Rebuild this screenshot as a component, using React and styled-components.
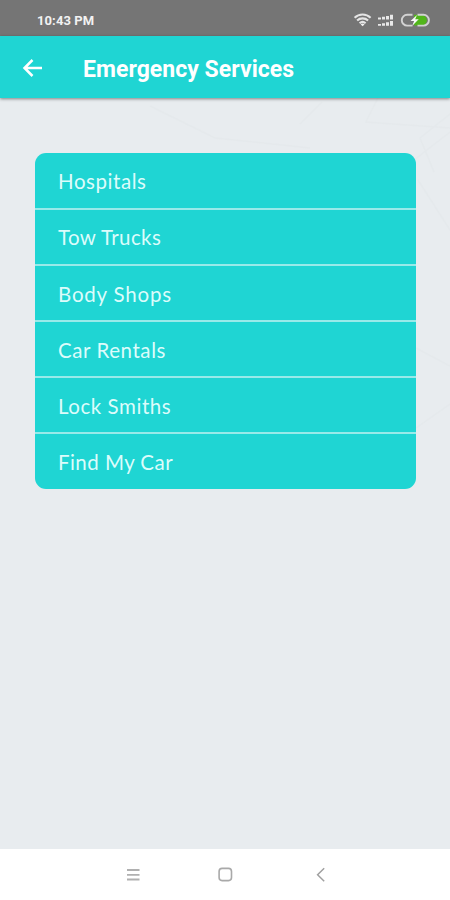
import React from "react";
import styled, { createGlobalStyle } from "styled-components";

const services = [
  { name: "Hospitals", spacing: 0.55 },
  { name: "Tow Trucks", spacing: 0.4, top: 0 },
  { name: "Body Shops", spacing: 0.8 },
  { name: "Car Rentals", spacing: 0.57 },
  { name: "Lock Smiths", spacing: 0.55 },
  { name: "Find My Car", spacing: 0.45 },
];

const GlobalStyle = createGlobalStyle`
  * {
    box-sizing: border-box;
  }
  body {
    margin: 0;
  }
`;

const Screen = styled.div`
  width: 450px;
  height: 900px;
  display: flex;
  flex-direction: column;
  overflow: hidden;
  background-color: #e8ecef;
  font-family: Roboto, sans-serif;
`;

const StatusBar = styled.div`
  height: 36px;
  flex-shrink: 0;
  display: flex;
  align-items: center;
  justify-content: space-between;
  padding: 4px 20px 0 37px;
  background-color: #757575;
  color: #f2f2f2;
`;

const Time = styled.span`
  padding-top: 1px;
  font-size: 13px;
  font-weight: 700;
  line-height: 16px;
  letter-spacing: 0.1px;
  white-space: nowrap;
`;

const Header = styled.header`
  height: 62px;
  flex-shrink: 0;
  display: flex;
  align-items: center;
  gap: 39px;
  padding: 1px 22px 0;
  background-color: #1fd5d3;
  color: white;
  box-shadow: 0 1px 3px rgba(0, 0, 0, 0.45);
  z-index: 1;
`;

const Title = styled.h1`
  margin: 0;
  padding-top: 4px;
  font-size: 23px;
  font-weight: 700;
  line-height: 28px;
  letter-spacing: 0.04px;
  white-space: nowrap;
`;

const Content = styled.main`
  position: relative;
  flex: 1;
  padding: 55px 34px 0 35px;
`;

const MapLines = styled.svg`
  position: absolute;
  top: 0;
  left: 0;
`;

const List = styled.ul`
  position: relative;
  margin: 0;
  padding: 0;
  list-style: none;
  border-radius: 11px;
  overflow: hidden;
  background-color: #1fd5d3;
`;

const Item = styled.li`
  height: 56px;
  display: flex;
  align-items: center;
  padding: ${({ $top = 2 }) => $top}px 23px 0;
  border-bottom: 2px solid #98eae9;
  color: #dcfcfb;
  font-family: Lato, sans-serif;
  font-size: 20.5px;
  letter-spacing: ${({ $spacing }) => $spacing}px;
  white-space: nowrap;

  &:first-child {
    height: 57px;
    padding-top: 1px;
  }
  &:last-child {
    height: 55px;
    padding-top: 0;
    border-bottom: none;
  }
`;

const NavBar = styled.nav`
  height: 51px;
  flex-shrink: 0;
  display: flex;
  align-items: center;
  padding-left: 125px;
  background-color: white;
`;

const NavIcon = styled.svg`
  margin-right: ${({ $gap }) => $gap || 0}px;
`;

const StatusIcons = () => (
  <svg width="78" height="18" viewBox="0 0 78 18">
    <g fill="none" stroke="#e4e4e4" strokeWidth="2.1">
      <path d="M2.6 6.8a11.5 11.5 0 0 1 16 0" />
      <path d="M5.1 9.6a8 8 0 0 1 11 0" />
      <path d="M7.6 12.2a4.6 4.6 0 0 1 6 0" />
    </g>
    <path d="M8.7 13.4a3 3 0 0 1 3.8 0L10.6 15.3z" fill="#f0f0f0" />
    <g fill="#e8e8e8">
      <path d="M26 6.6h3v1.8h-3zM30 5.8h3v2.6h-3zM34 5h3v3.4h-3zM38 3.8h3v4.6h-3z" />
      <path d="M26 13h3v1.8h-3zM30 12.2h3v2.6h-3zM34 11.2h3v3.6h-3zM38 10h3v4.8h-3z" />
    </g>
    <path d="M62 3.8h7.5a5.4 5.4 0 0 1 0 10.8H62z" fill="#51b51a" />
    <path
      d="M60.5 3.8H55.2a5.4 5.4 0 0 0 0 10.8h5.3M65.5 3.8h6a5.4 5.4 0 0 1 0 10.8h-6"
      fill="none"
      stroke="#d2d2d2"
      strokeWidth="1.9"
    />
    <path d="M65 4l-6.5 6h3.6l-1.8 4.7 6.4-6.4h-3.5z" fill="#f8f8f8" />
  </svg>
);

const BackIcon = () => (
  <svg width="22" height="20" viewBox="0 0 22 20">
    <path
      d="M10.5 2L2.5 10l8 8M3 10h17"
      fill="none"
      stroke="currentColor"
      strokeWidth="2.5"
    />
  </svg>
);

const App = () => {
  return (
    <>
      <GlobalStyle />
      <Screen>
        <StatusBar>
          <Time>10:43 PM</Time>
          <StatusIcons />
        </StatusBar>
        <Header>
          <BackIcon />
          <Title>Emergency Services</Title>
        </Header>
        <Content>
          <MapLines width="450" height="440" viewBox="0 0 450 440">
            <path
              d="M150 8l65 32 95 10M378 0l-12 24 84 6M420 40l30 -24M420 40l14 34M450 34l-45 35M300 26l22-22M418 82l32 50M416 250l34 18M416 330l34-24"
              fill="none"
              stroke="#e0e5e8"
              strokeWidth="1.5"
              opacity="0.4"
            />
          </MapLines>
          <List>
            {services.map((service) => {
              return (
                <Item
                  key={service.name}
                  $spacing={service.spacing}
                  $top={service.top}
                >
                  {service.name}
                </Item>
              );
            })}
          </List>
        </Content>
        <NavBar>
          <NavIcon $gap={76} width="16" height="14" viewBox="0 0 16 14">
            <path
              d="M2 2h12.5M2 6.8h12.5M2 11.5h12.5"
              stroke="#b0b0b0"
              strokeWidth="1.8"
            />
          </NavIcon>
          <NavIcon $gap={82} width="16" height="16" viewBox="0 0 16 16">
            <rect
              x="2.1"
              y="1.4"
              width="12.4"
              height="12.2"
              rx="3"
              fill="none"
              stroke="#a9a9a9"
              strokeWidth="1.6"
            />
          </NavIcon>
          <NavIcon width="12" height="16" viewBox="0 0 12 16">
            <path
              d="M9.2 1.2L2.6 7.7l6.6 6.5"
              fill="none"
              stroke="#a0a0a0"
              strokeWidth="1.5"
            />
          </NavIcon>
        </NavBar>
      </Screen>
    </>
  );
};

export default App;
